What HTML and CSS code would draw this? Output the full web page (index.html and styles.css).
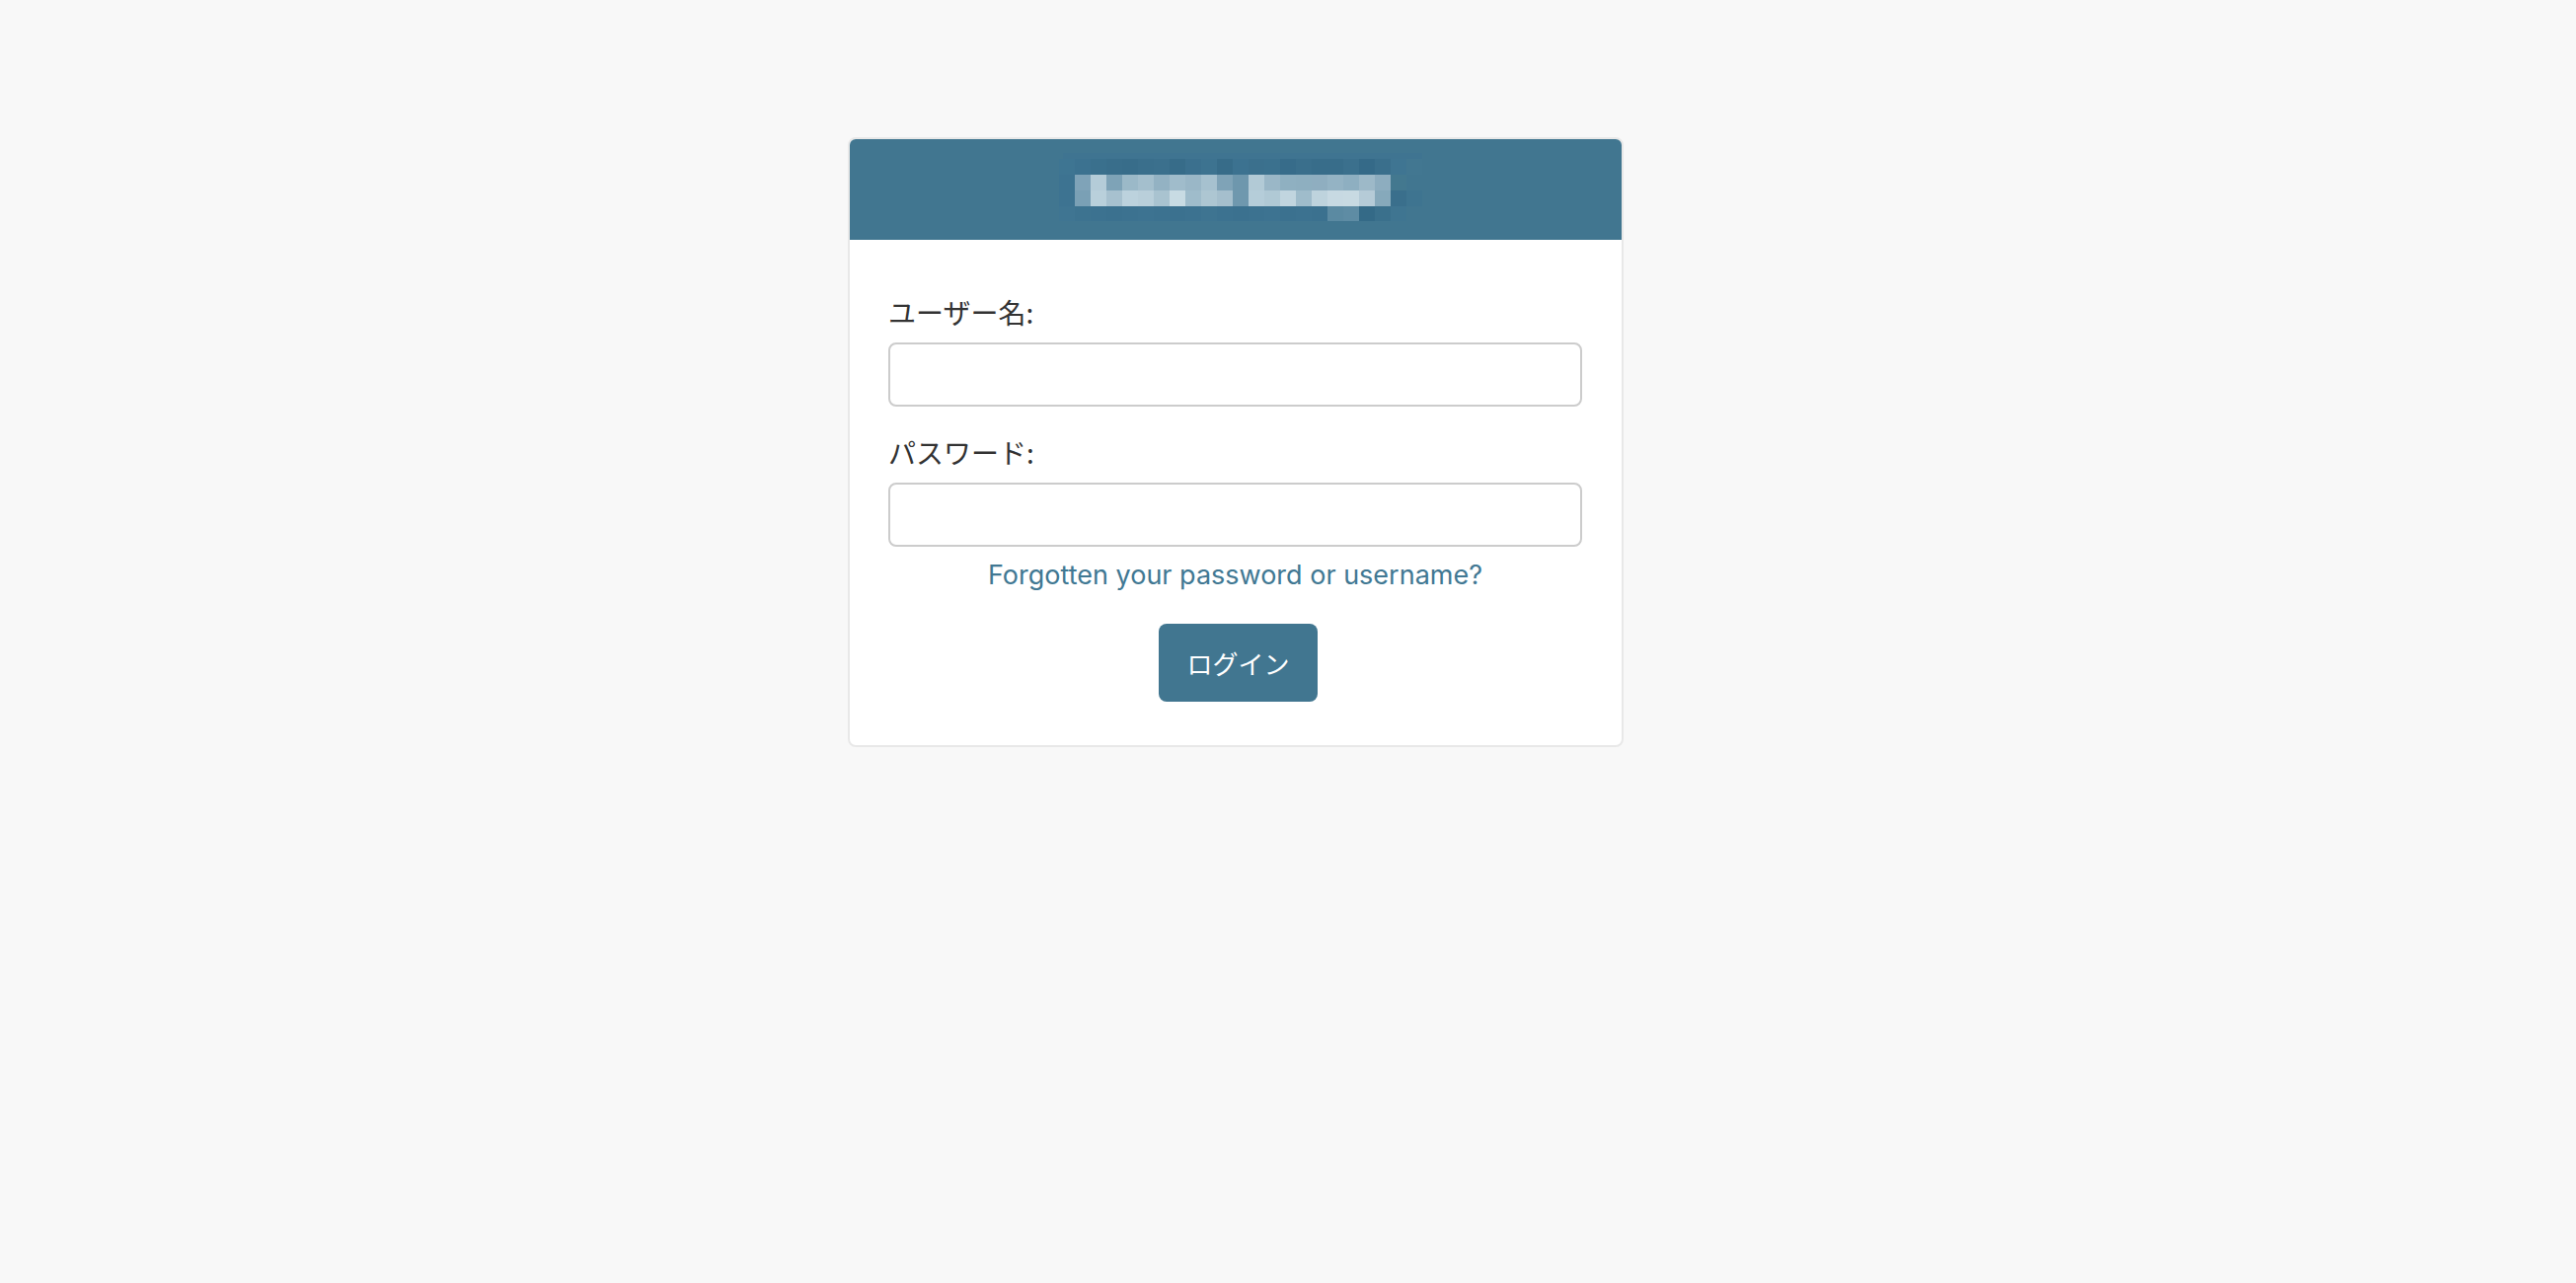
FILE: index.html
```html
<!DOCTYPE html>
<html lang="ja">
<head>
  <meta charset="UTF-8">
  <meta name="viewport" content="width=device-width, initial-scale=1.0">
  <title>ログイン</title>
  <link rel="stylesheet" href="styles.css">
</head>
<body>
  <!-- === LOGIN BOX === -->
  <div id="container">
    <div id="header">
      <!-- site title (pixelated) -->
      <svg class="site-title" width="368" height="72" viewBox="0 0 368 72" shape-rendering="crispEdges" role="img" aria-label="サイト名">
        <rect x="4" y="3" width="364" height="6" fill="#3f7491"/>
        <g id="row1"></g>
        <g id="row2"></g>
        <g id="row3"></g>
        <g id="row4"></g>
      </svg>
    </div>

    <div id="content">
      <form class="login-form" action="#" method="post" onsubmit="return false">
        <div class="form-row">
          <label for="id_username">ユーザー名:</label>
          <input type="text" id="id_username" name="username" autocomplete="username">
        </div>
        <div class="form-row">
          <label for="id_password">パスワード:</label>
          <input type="password" id="id_password" name="password" autocomplete="current-password">
        </div>
        <div class="password-reset-link">
          <a href="#">Forgotten your password or username?</a>
        </div>
        <div class="submit-row">
          <input type="submit" value="ログイン">
        </div>
      </form>
    </div>
  </div>

  <script>
  // === mosaic colours of the blurred title, one list per row
  const rows = {
    row1: ["#3e7592","#3c7290","#3a708d","#396e8b","#386d8a","#3a6f8c","#3b708d","#376c89","#3b708e","#3d7390","#376c89","#3c7290","#3b708d","#3b718e","#376c8a","#3a6f8c","#386d8a","#386d8a","#3b708d","#356a88","#3a6f8c","#3f7592","#427791"],
    row2: ["#3d7391","#7fa3b8","#b4ccd8","#7ea3b7","#9bb9c8","#a4bfcd","#93b2c3","#a0bccb","#9ab7c7","#a6c1cf","#7fa3b7","#6e97ad","#b2cad6","#9ab7c7","#8fb0c1","#8eafc0","#8faec0","#94b3c4","#8eafc1","#9db9c8","#8dadbf","#43788f","#417690"],
    row3: ["#3d7391","#7aa0b5","#b9d0db","#a7c1cf","#bcd2dd","#b9cfda","#a9c3d0","#c8dbe3","#9fbccb","#adc6d2","#a5bfcd","#6f98ae","#b5cdd9","#b0c9d5","#c1d5df","#9fbccb","#bed3dd","#c7d9e2","#c8dae2","#b5cbd7","#86a9bb","#3a6f8c","#3e7490"],
    row4: ["#3f7592","#3d7390","#3c7290","#3b718f","#3c7290","#3d7391","#3c7290","#3b718f","#3c7290","#3e7491","#3c7290","#3b718f","#3c7290","#3d7391","#3b718f","#3c7290","#3b718f","#5b8aa2","#5e8ca4","#346a87","#3a708c","#3f7591","#417690"]
  };
  const tops = { row1: 9, row2: 25, row3: 41, row4: 57 };

  for (const id in rows) {
    const g = document.getElementById(id);
    rows[id].forEach((c, i) => {
      const r = document.createElementNS("http://www.w3.org/2000/svg", "rect");
      r.setAttribute("x", i * 16);
      r.setAttribute("y", tops[id]);
      r.setAttribute("width", 16);
      r.setAttribute("height", 16);
      r.setAttribute("fill", c);
      g.appendChild(r);
    });
  }
  </script>
</body>
</html>
```

FILE: styles.css
```css
    body {
      margin: 0;
      padding: 0;
      background: #f8f8f8;
      color: #333;
      font-family: Inter, "Noto Sans CJK JP", sans-serif;
      font-size: 27px;
    }

    /* === LOGIN BOX === */
    #container {
      width: 786px;
      box-sizing: border-box;
      margin: 139px 0 0 859px;
      background: #fff;
      border: 2px solid #e8e8e8;
      border-radius: 8px;
      overflow: hidden;
    }

    /* === HEADER (blurred site name) === */
    #header {
      height: 102px;
      box-sizing: border-box;
      background: #417690;
      display: flex;
      justify-content: center;
      align-items: flex-start;
      padding: 11px 0 0 10px;
    }

    .site-title {
      display: block;
    }

    /* === FORM === */
    #content {
      padding: 40px 40px 44px 39px;
    }

    .form-row {
      padding: 8px 0;
    }

    .form-row + .form-row {
      margin-top: 5px;
    }

    .form-row label {
      display: block;
      font-family: "Noto Sans CJK JP", sans-serif;
      font-size: 28px;
      line-height: 50px;
      padding-bottom: 6px;
      color: #333;
    }

    .form-row input {
      display: block;
      width: 100%;
      height: 65px;
      box-sizing: border-box;
      padding: 16px;
      margin: 0;
      font-size: 26px;
      border: 2px solid #cccccc;
      border-radius: 8px;
      background: #fff;
      outline: none;
    }

    .password-reset-link {
      text-align: center;
      line-height: 40px;
      padding-top: 1px;
    }

    .password-reset-link a {
      color: #417893;
      text-decoration: none;
    }

    .submit-row {
      padding-top: 29px;
      padding-left: 6px;
      text-align: center;
    }

    .submit-row input {
      font-family: "Noto Sans CJK JP", sans-serif;
      font-size: 26px;
      line-height: 39px;
      padding: 20px 28px;
      margin: 0;
      color: #fff;
      background: #417690;
      border: none;
      border-radius: 8px;
      cursor: pointer;
    }

    .submit-row input:hover {
      background: #205067;
    }
```
